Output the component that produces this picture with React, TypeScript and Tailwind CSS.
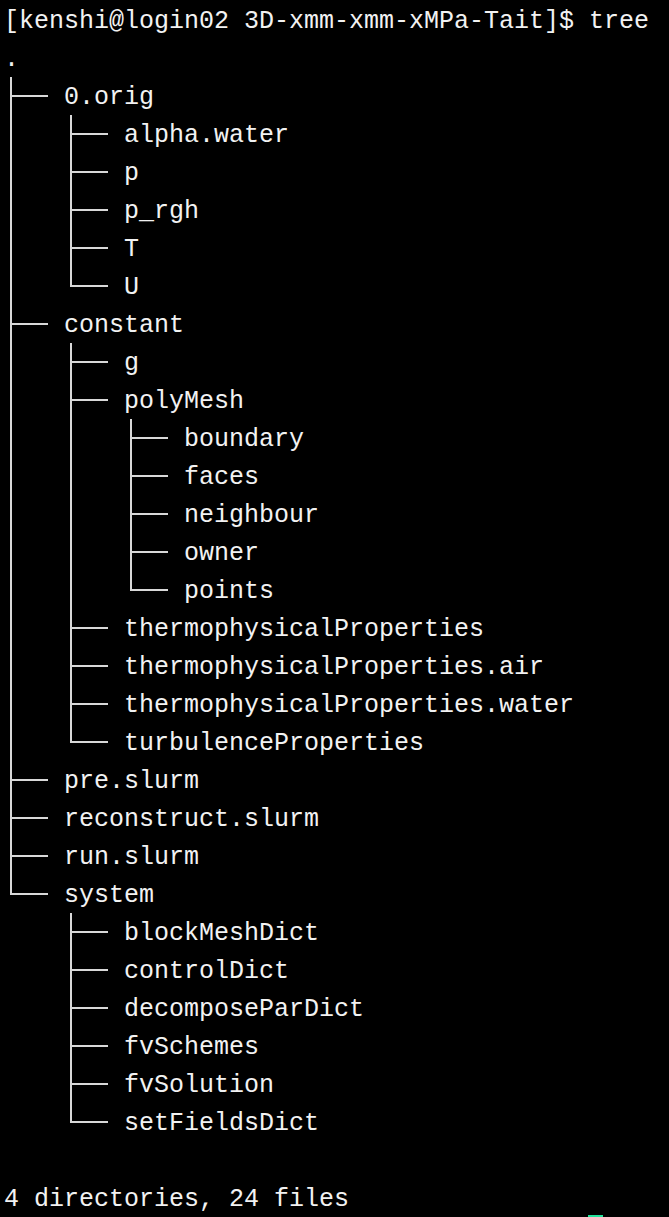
import React from "react";

type Cell = "pipe" | "tee" | "corner" | "blank";

const rows: { prefix: Cell[]; name: string }[] = [
  { prefix: [], name: "." },
  { prefix: ["tee"], name: "0.orig" },
  { prefix: ["pipe", "tee"], name: "alpha.water" },
  { prefix: ["pipe", "tee"], name: "p" },
  { prefix: ["pipe", "tee"], name: "p_rgh" },
  { prefix: ["pipe", "tee"], name: "T" },
  { prefix: ["pipe", "corner"], name: "U" },
  { prefix: ["tee"], name: "constant" },
  { prefix: ["pipe", "tee"], name: "g" },
  { prefix: ["pipe", "tee"], name: "polyMesh" },
  { prefix: ["pipe", "pipe", "tee"], name: "boundary" },
  { prefix: ["pipe", "pipe", "tee"], name: "faces" },
  { prefix: ["pipe", "pipe", "tee"], name: "neighbour" },
  { prefix: ["pipe", "pipe", "tee"], name: "owner" },
  { prefix: ["pipe", "pipe", "corner"], name: "points" },
  { prefix: ["pipe", "tee"], name: "thermophysicalProperties" },
  { prefix: ["pipe", "tee"], name: "thermophysicalProperties.air" },
  { prefix: ["pipe", "tee"], name: "thermophysicalProperties.water" },
  { prefix: ["pipe", "corner"], name: "turbulenceProperties" },
  { prefix: ["tee"], name: "pre.slurm" },
  { prefix: ["tee"], name: "reconstruct.slurm" },
  { prefix: ["tee"], name: "run.slurm" },
  { prefix: ["corner"], name: "system" },
  { prefix: ["blank", "tee"], name: "blockMeshDict" },
  { prefix: ["blank", "tee"], name: "controlDict" },
  { prefix: ["blank", "tee"], name: "decomposeParDict" },
  { prefix: ["blank", "tee"], name: "fvSchemes" },
  { prefix: ["blank", "tee"], name: "fvSolution" },
  { prefix: ["blank", "corner"], name: "setFieldsDict" },
];

// one 4-char indent cell of the tree, drawn like a terminal does (joined lines)
const TreeCell: React.FC<{ kind: Cell }> = ({ kind }) => (
  <svg width="60" height="38" viewBox="0 0 60 38" className="shrink-0 block">
    {(kind === "pipe" || kind === "tee") && <rect x="6" y="0" width="2" height="38" fill="#d8d8d8" />}
    {kind === "corner" && <rect x="6" y="0" width="2" height="20" fill="#d8d8d8" />}
    {(kind === "tee" || kind === "corner") && <rect x="6" y="18" width="38" height="2" fill="#d8d8d8" />}
  </svg>
);

export default function App() {
  return (
    <div
      className="h-screen w-screen overflow-hidden bg-black text-[#f2f2f2] pl-[4px] pt-[1px] text-[25px] leading-[42px] whitespace-pre"
      style={{ fontFamily: '"Liberation Mono", "DejaVu Sans Mono", monospace' }}
    >
      <div className="h-[38px]">[kenshi@login02 3D-xmm-xmm-xMPa-Tait]$ tree</div>
      {rows.map((r, i) => (
        <div key={i} className="flex h-[38px]">
          {r.prefix.map((c, j) => (
            <TreeCell key={j} kind={c} />
          ))}
          <span className="h-[38px]">{r.name}</span>
        </div>
      ))}
      <div className="h-[38px]"></div>
      <div className="h-[36px]">4 directories, 24 files</div>
      <div className="h-[2px] w-[15px] ml-[584px] bg-[#22e39b]"></div>
    </div>
  );
}
